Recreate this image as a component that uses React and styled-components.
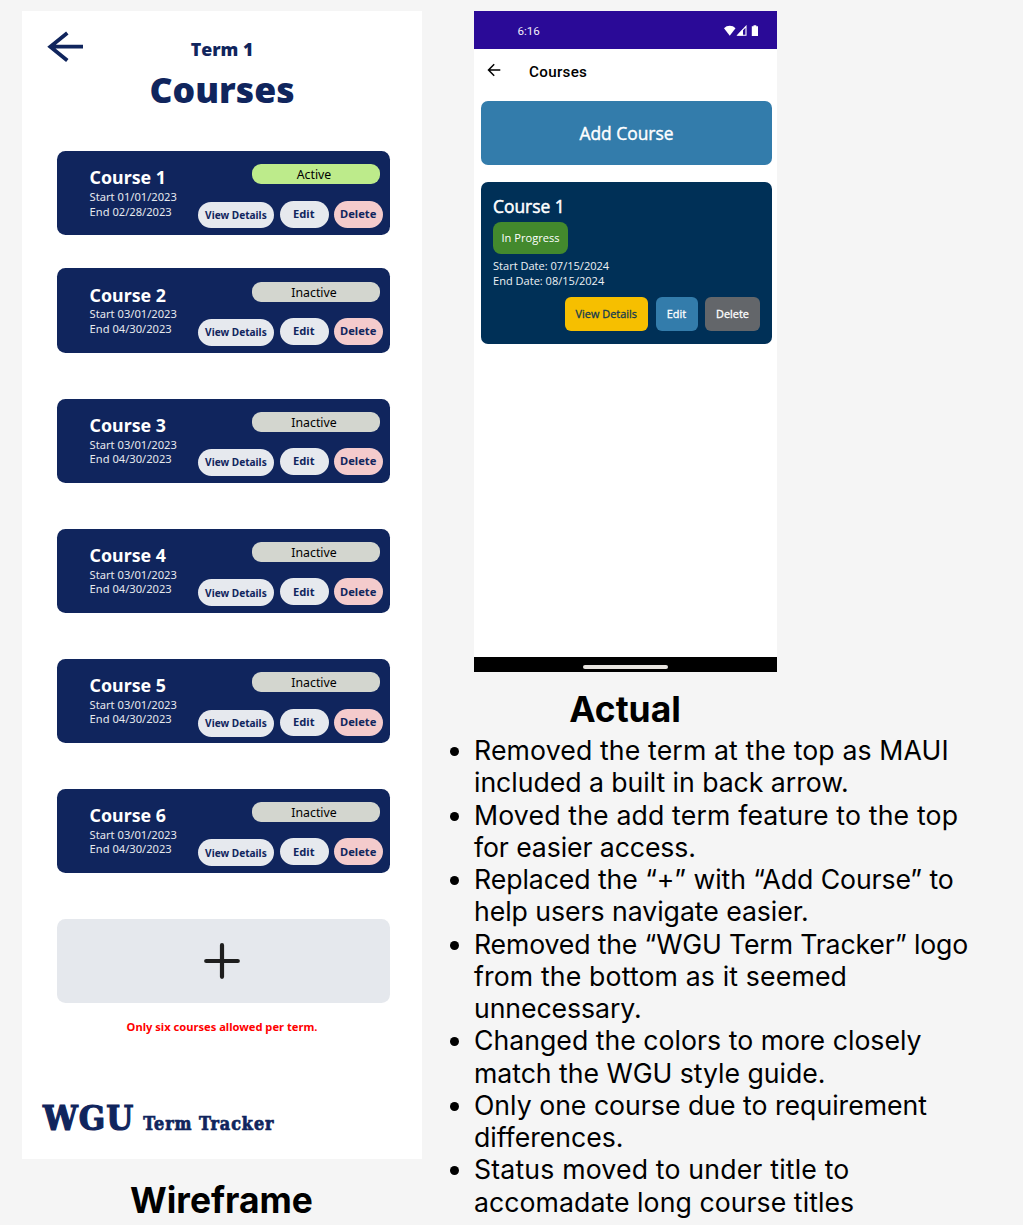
import React from "react";
import styled, { createGlobalStyle } from "styled-components";

const Global = createGlobalStyle`
  * { box-sizing: border-box; }
  body { margin: 0; background: #f5f5f5; }
  h1, h2, h3, p, ul { margin: 0; padding: 0; }
  button { border: 0; padding: 0; font: inherit; color: inherit; }
`;

const noto = `"Noto Sans", "Open Sans", sans-serif`;
const navy = "#10255d";

const Board = styled.main`
  width: 1023px;
  height: 1225px;
  padding: 11px 0 0 22px;
  display: flex;
  align-items: flex-start;
  gap: 52px;
  overflow: hidden;
  background: #f5f5f5;
`;

const Column = styled.section`
  width: ${(p) => p.$width}px;
  flex: none;
  display: flex;
  flex-direction: column;
`;

const Caption = styled.h2`
  width: ${(p) => p.$width}px;
  margin-top: ${(p) => p.$top}px;
  font: 700 35.4px/44px Inter, sans-serif;
  text-align: center;
  white-space: nowrap;
  color: #000;
`;

/* ---------- wireframe ---------- */

const Wireframe = styled.div`
  width: 400px;
  height: 1148px;
  background: #fff;
  display: flex;
  flex-direction: column;
`;

const WireHeader = styled.header`
  height: 140px;
  display: grid;
  grid-template-columns: 62px 276px 62px;
  align-items: start;
`;

const BackIcon = styled.svg`
  width: 37px;
  height: 32px;
  margin: 20px 0 0 25px;
`;

const WireTitles = styled.div`
  display: flex;
  flex-direction: column;
  align-items: center;
  color: ${navy};
  font-family: "Open Sans", sans-serif;
  white-space: nowrap;
`;

const TermName = styled.p`
  margin-top: 26px;
  font-size: 17.8px;
  line-height: 24px;
  font-weight: 800;
`;

const WireTitle = styled.h1`
  margin-top: 4px;
  font-size: 35.6px;
  line-height: 48px;
  font-weight: 800;
`;

const CourseList = styled.div`
  display: flex;
  flex-direction: column;
  padding-left: 35.3px;
`;

const WireCard = styled.article`
  width: 332.4px;
  height: 84.3px;
  margin-bottom: ${(p) => p.$after}px;
  border-radius: 8.5px;
  background: ${navy};
  display: flex;
  justify-content: space-between;
  padding: 0 6.5px 0 32.3px;
  font-family: ${noto};
  white-space: nowrap;
`;

const WireInfo = styled.div`
  padding-top: 14.2px;
  color: #fff;
`;

const WireName = styled.h3`
  font-size: 17.8px;
  line-height: 24px;
  font-weight: 700;
`;

const WireDates = styled.p`
  margin-top: 0.9px;
  font-size: 11.15px;
  line-height: 14.5px;
  color: #e6e9ee;
`;

const WireControls = styled.div`
  display: flex;
  flex-direction: column;
  align-items: flex-end;
`;

const WireStatus = styled.span`
  width: 128px;
  height: 20px;
  margin: 13.2px 3.2px 0 0;
  padding-right: 4px;
  border-radius: 9px;
  background: ${(p) => (p.$active ? "#bdeb8b" : "#d3d6cf")};
  color: #000;
  font-size: 12.3px;
  line-height: 21px;
  text-align: center;
`;

const WireActions = styled.div`
  display: flex;
  gap: 5.4px;
  margin-top: ${(p) => p.$top}px;
`;

const WireButton = styled.button`
  width: ${(p) => p.$width}px;
  height: 26.8px;
  margin-top: ${(p) => p.$drop || 0}px;
  padding-right: 1px;
  border-radius: 13.5px;
  background: ${(p) => (p.$danger ? "#f4cbcc" : "#e6e9ee")};
  color: ${navy};
  font-size: ${(p) => p.$size || 11.15}px;
  line-height: 26px;
  font-weight: 700;
  text-align: center;
`;

const AddTile = styled.button`
  width: 332.4px;
  height: 84.3px;
  border-radius: 8.5px;
  background: #e5e8ed;
  display: flex;
  align-items: center;
  justify-content: center;
  padding-right: 3px;
`;

const Limit = styled.p`
  margin-top: 16px;
  font: 700 11.15px/16px ${noto};
  text-align: center;
  color: #f00;
`;

const Brand = styled.div`
  display: flex;
  align-items: baseline;
  gap: 9px;
  margin: 61px 0 0 21px;
  font-family: "DejaVu Serif Condensed", "DejaVu Serif", serif;
  font-stretch: condensed;
  font-weight: 700;
  color: ${navy};
  white-space: nowrap;
`;

const BrandMark = styled.span`
  font-size: 34.4px;
  line-height: 44px;
  letter-spacing: 1px;
  -webkit-text-stroke: 1.2px ${navy};
`;

const BrandName = styled.span`
  font-size: 17.8px;
  letter-spacing: 0.95px;
  -webkit-text-stroke: 0.7px ${navy};
`;

/* ---------- phone ---------- */

const Phone = styled.div`
  width: 302.6px;
  height: 660.5px;
  background: #fff;
  display: flex;
  flex-direction: column;
`;

const StatusBar = styled.div`
  height: 37.5px;
  padding: 2px 17px 0 43.5px;
  display: flex;
  align-items: center;
  justify-content: space-between;
  background: #2a0a97;
  color: #f1eefa;
  font: 400 11.6px/14px Roboto, sans-serif;
`;

const AppBar = styled.div`
  height: 52px;
  padding: 0 0 9px 13px;
  display: flex;
  align-items: center;
  gap: 28px;
  color: #000;
  font: 500 15.2px/20px Roboto, sans-serif;
`;

const AppTitle = styled.h2`
  font: inherit;
  padding-top: 3px;
  letter-spacing: 0.3px;
`;

const AddCourse = styled.button`
  width: 291px;
  height: 64px;
  margin-left: 7px;
  border-radius: 7px;
  background: #337cab;
  color: #fff;
  font: 400 17.4px/64px "Open Sans", sans-serif;
  -webkit-text-stroke: 0.4px currentColor;
`;

const AppCard = styled.article`
  width: 291px;
  height: 162px;
  margin: 17px 0 0 7px;
  padding: 12px 12px 12px;
  border-radius: 7px;
  background: #003057;
  color: #fff;
  display: flex;
  flex-direction: column;
  align-items: flex-start;
  font-family: "Open Sans", sans-serif;
  white-space: nowrap;
`;

const AppCourse = styled.h3`
  font-size: 17.4px;
  line-height: 24px;
  font-weight: 400;
  -webkit-text-stroke: 0.5px currentColor;
`;

const Progress = styled.span`
  width: 75px;
  height: 32px;
  margin-top: 4px;
  border-radius: 8px;
  background: #43892d;
  font-size: 11.1px;
  line-height: 32px;
  text-align: center;
`;

const AppDates = styled.p`
  margin-top: 4.3px;
  font-size: 11.05px;
  line-height: 15.3px;
  color: #eef1f4;
`;

const AppActions = styled.div`
  align-self: flex-end;
  display: flex;
  gap: 7.5px;
  margin-top: 8.2px;
`;

const AppButton = styled.button`
  width: ${(p) => p.$width}px;
  height: 34.5px;
  border-radius: 6px;
  background: ${(p) => p.$bg};
  color: ${(p) => p.$fg || "#fff"};
  font-size: 10.9px;
  line-height: 34px;
  -webkit-text-stroke: 0.3px currentColor;
`;

const NavBar = styled.div`
  height: 14.5px;
  margin-top: auto;
  background: #000;
  display: flex;
  justify-content: center;
  padding-top: 8px;
`;

const NavHandle = styled.div`
  width: 85px;
  height: 3.5px;
  border-radius: 2px;
  background: #e8e4e0;
`;

/* ---------- notes ---------- */

const Notes = styled.ul`
  margin: 2.5px 0 0 -26px;
  list-style: none;
  font: 400 26.65px/32.25px Inter, sans-serif;
  color: #000;
  white-space: nowrap;
`;

const Note = styled.li`
  display: grid;
  grid-template-columns: 26px auto;
  &::before {
    content: "";
    width: 9px;
    height: 9px;
    margin: 13px 0 0 2px;
    border-radius: 50%;
    background: #000;
  }
`;

const Line = styled.span`
  display: block;
  letter-spacing: ${(p) => p.$track}px;
`;

const courses = [
  { name: "Course 1", start: "01/01/2023", end: "02/28/2023", active: true, after: 33.1, top: 16.6 },
  { name: "Course 2", start: "03/01/2023", end: "04/30/2023", after: 46, top: 16.4 },
  { name: "Course 3", start: "03/01/2023", end: "04/30/2023", after: 45.7, top: 16.2 },
  { name: "Course 4", start: "03/01/2023", end: "04/30/2023", after: 45.7, top: 16.4 },
  { name: "Course 5", start: "03/01/2023", end: "04/30/2023", after: 45.7, top: 17.2 },
  { name: "Course 6", start: "03/01/2023", end: "04/30/2023", after: 45.7, top: 16.4 },
];

const notes = [
  [["Removed the term at the top as MAUI", 0.14], ["included a built in back arrow.", -0.04]],
  [["Moved the add term feature to the top", 0.16], ["for easier access.", -0.1]],
  [["Replaced the “+” with “Add Course” to", -0.07], ["help users navigate easier.", -0.04]],
  [["Removed the “WGU Term Tracker” logo", -0.15], ["from the bottom as it seemed", 0.15], ["unnecessary.", -0.08]],
  [["Changed the colors to more closely", 0.02], ["match the WGU style guide.", -0.03]],
  [["Only one course due to requirement", 0], ["differences.", 0]],
  [["Status moved to under title to", 0.18], ["accomadate long course titles", 0.06]],
];

function WireCourse({ course }) {
  return (
    <WireCard $after={course.after}>
      <WireInfo>
        <WireName>{course.name}</WireName>
        <WireDates>Start {course.start}<br />End {course.end}</WireDates>
      </WireInfo>
      <WireControls>
        <WireStatus $active={course.active}>{course.active ? "Active" : "Inactive"}</WireStatus>
        <WireActions $top={course.top}>
          <WireButton $width={76} $size={10.1} $drop={0.9}>View Details</WireButton>
          <WireButton $width={49}>Edit</WireButton>
          <WireButton $width={49} $danger>Delete</WireButton>
        </WireActions>
      </WireControls>
    </WireCard>
  );
}

export default function App() {
  return (
    <>
      <Global />
      <Board>
        <Column $width={400}>
          <Wireframe>
            <WireHeader>
              <BackIcon viewBox="0 0 37 32" fill="none" stroke={navy} strokeWidth="3.8">
                <path d="M20.3 2 3.3 15.7 20.3 29.4M3 15.7H36" />
              </BackIcon>
              <WireTitles>
                <TermName>Term 1</TermName>
                <WireTitle>Courses</WireTitle>
              </WireTitles>
            </WireHeader>
            <CourseList>
              {courses.map((c) => <WireCourse key={c.name} course={c} />)}
              <AddTile aria-label="Add course">
                <svg width="36" height="36" viewBox="0 0 36 36" stroke="#1e1e1e" strokeWidth="4.2" strokeLinecap="round">
                  <path d="M18 2.2V33.8M2.2 18H33.8" />
                </svg>
              </AddTile>
            </CourseList>
            <Limit>Only six courses allowed per term.</Limit>
            <Brand>
              <BrandMark>WGU</BrandMark>
              <BrandName>Term Tracker</BrandName>
            </Brand>
          </Wireframe>
          <Caption $width={399} $top={20}>Wireframe</Caption>
        </Column>

        <Column $width={520}>
          <Phone>
            <StatusBar>
              <span>6:16</span>
              <svg width="36" height="12" viewBox="0 0 36 12" fill="#fff">
                <path d="M0 3.200C3-.1 8.500-.1 11.500 3.200L5.750 10.700Z" />
                <path d="M22 1.300V10.200H13.700Z" fill="none" stroke="#fff" strokeWidth="1.100" />
                <path d="M19 4V10.500H13Z" />
                <path d="M29.500 1.200V.2H32.300V1.200H34V10.900H27.800V1.200Z" />
              </svg>
            </StatusBar>
            <AppBar>
              <svg width="14" height="14" viewBox="0 0 14 14" fill="none" stroke="#000" strokeWidth="1.5">
                <path d="M7.200 1.200 1.500 7 7.200 12.800M1.500 7H13.300" />
              </svg>
              <AppTitle>Courses</AppTitle>
            </AppBar>
            <AddCourse>Add Course</AddCourse>
            <AppCard>
              <AppCourse>Course 1</AppCourse>
              <Progress>In Progress</Progress>
              <AppDates>Start Date: 07/15/2024<br />End Date: 08/15/2024</AppDates>
              <AppActions>
                <AppButton $width={83.5} $bg="#f6bf00" $fg="#123a50">View Details</AppButton>
                <AppButton $width={42} $bg="#337cab">Edit</AppButton>
                <AppButton $width={55} $bg="#63666a">Delete</AppButton>
              </AppActions>
            </AppCard>
            <NavBar><NavHandle /></NavBar>
          </Phone>
          <Caption $width={302} $top={16}>Actual</Caption>
          <Notes>
            {notes.map((lines) => (
              <Note key={lines[0][0]}>
                <div>{lines.map(([text, track]) => <Line key={text} $track={track}>{text}</Line>)}</div>
              </Note>
            ))}
          </Notes>
        </Column>
      </Board>
    </>
  );
}
